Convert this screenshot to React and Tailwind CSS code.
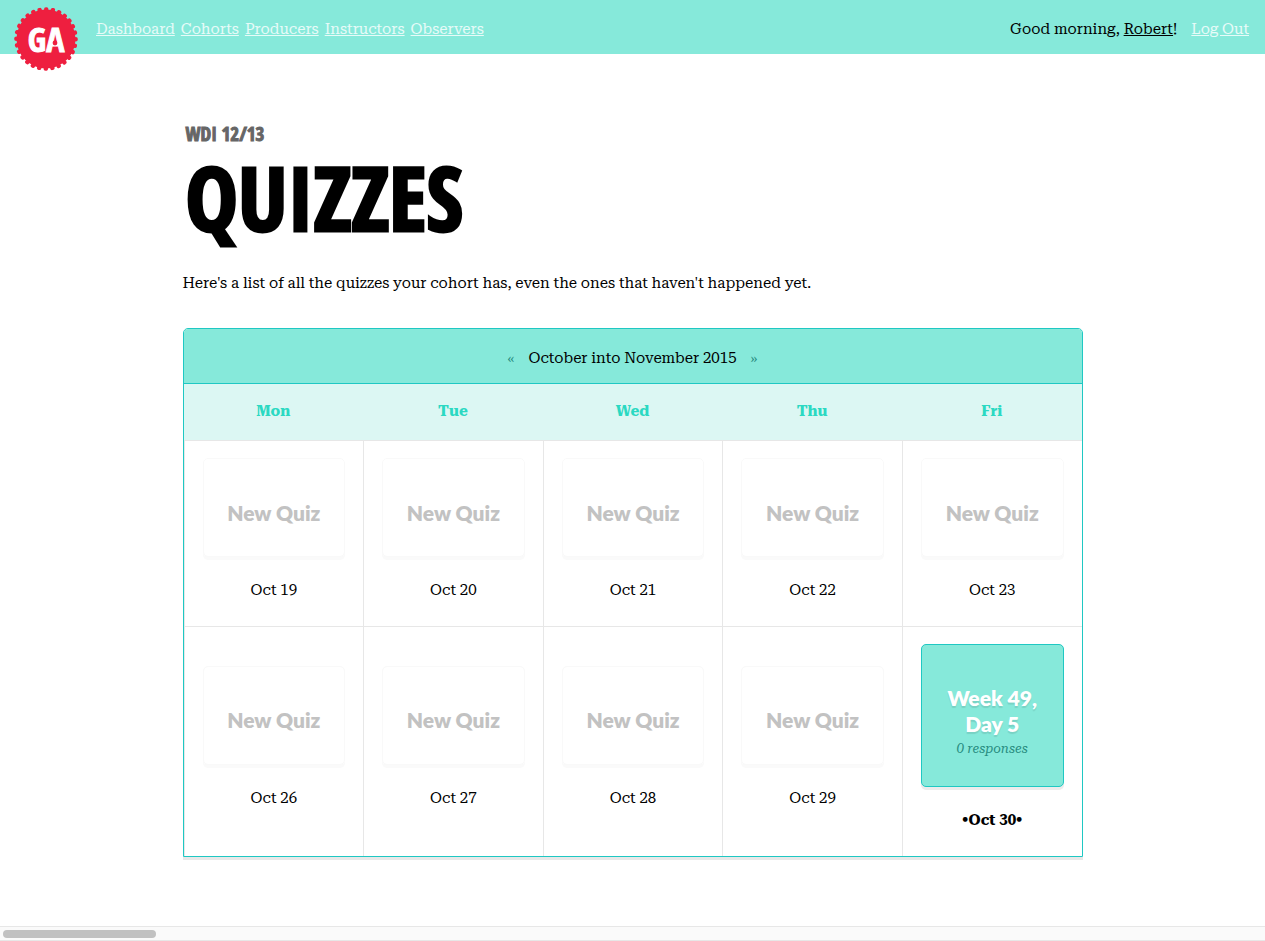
const navLinks = ["Dashboard", "Cohorts", "Producers", "Instructors", "Observers"];
const days = ["Mon", "Tue", "Wed", "Thu", "Fri"];
const weeks = [
  [{ date: "Oct 19" }, { date: "Oct 20" }, { date: "Oct 21" }, { date: "Oct 22" }, { date: "Oct 23" }],
  [
    { date: "Oct 26" },
    { date: "Oct 27" },
    { date: "Oct 28" },
    { date: "Oct 29" },
    { date: "Oct 30", today: true, quiz: { title: "Week 49, Day 5", responses: 0 } },
  ],
];

function Logo() {
  return (
    <svg viewBox="0 0 64 64" className="size-16" role="img" aria-label="General Assembly">
      <circle cx="32" cy="32" r="29.5" fill="#ee1f3f" />
      <circle
        cx="32"
        cy="32"
        r="29.8"
        fill="none"
        stroke="#ee1f3f"
        strokeWidth="4"
        strokeLinecap="round"
        strokeDasharray="0.5 6.5"
        pathLength="196"
      />
      <text
        x="32"
        y="45"
        textAnchor="middle"
        fill="#fff"
        stroke="#fff"
        strokeWidth="1"
        className="font-['Open_Sans_Condensed','Roboto_Condensed',sans-serif] text-[34px] font-bold"
      >
        GA
      </text>
      <circle cx="41" cy="36" r="2.4" fill="#ee1f3f" />
    </svg>
  );
}

function Header() {
  return (
    <header className="flex h-[54px] items-start gap-[18px] bg-[#86e9da] pr-4 pl-[14px]">
      <a href="#home" className="mt-[7px] shrink-0">
        <Logo />
      </a>
      <nav className="flex h-[58px] flex-1 items-center gap-[6px]">
        {navLinks.map((label) => (
          <a key={label} href={`#${label.toLowerCase()}`} className="text-white/80 underline">
            {label}
          </a>
        ))}
      </nav>
      <div className="flex h-[58px] items-center gap-[14px]">
        <p>
          Good morning,{" "}
          <a href="#profile" className="underline">
            Robert
          </a>
          !
        </p>
        <a href="#logout" className="text-white/80 underline">
          Log Out
        </a>
      </div>
    </header>
  );
}

function QuizCard({ quiz }) {
  if (!quiz) {
    return (
      <a
        href="#new-quiz"
        className="flex h-[99px] items-center justify-center rounded-[5px] border border-[#f9f9f9] pt-[10px] font-['Lato',sans-serif] text-[21px] leading-[26px] font-extrabold text-[#c2c2c2] shadow-[0_3px_0_#fafafa]"
      >
        New Quiz
      </a>
    );
  }
  return (
    <a
      href="#quiz"
      className="flex aspect-square flex-col items-center justify-center rounded-[5px] border border-[#1fc8c3] bg-[#86e9da] px-4 pt-4 shadow-[0_3px_0_#ececec]"
    >
      <span className="font-['Lato',sans-serif] text-[21px] leading-[26px] font-extrabold text-white [text-shadow:0_2px_1px_rgba(0,0,0,0.1)]">
        {quiz.title}
      </span>
      <em className="text-[13px] leading-6 text-[#288c80]">{quiz.responses} responses</em>
    </a>
  );
}

function Calendar() {
  return (
    <section className="overflow-hidden rounded-[5px] rounded-b-none border border-[#1fc8c3] shadow-[0_3px_0_#e8e8e8]">
      <div className="flex items-center justify-center gap-[14px] border-b border-[#1fc8c3] bg-[#86e9da] pt-[17px] pb-[13px]">
        <a href="#previous" aria-label="Previous weeks" className="text-sm leading-6 text-[#288c80]">
          «
        </a>
        <h2>October into November 2015</h2>
        <a href="#next" aria-label="Next weeks" className="text-sm leading-6 text-[#288c80]">
          »
        </a>
      </div>
      <table className="w-full table-fixed border-separate border-spacing-0 text-center">
        <thead className="bg-[#dcf7f3] text-[#2bd9c2]">
          <tr>
            {days.map((day) => (
              <th key={day} scope="col" className="pt-[15px] pb-[17px] font-bold">
                {day}
              </th>
            ))}
          </tr>
        </thead>
        <tbody>
          {weeks.map((week) => (
            <tr key={week[0].date}>
              {week.map(({ date, today, quiz }) => (
                <td
                  key={date}
                  className="border-t border-l border-[#e7e7e7] px-[18px] pt-[17px] pb-6 align-middle"
                >
                  <QuizCard quiz={quiz} />
                  <p className={today ? "mt-[21px] font-bold" : "mt-[21px]"}>{today ? `•${date}•` : date}</p>
                </td>
              ))}
            </tr>
          ))}
        </tbody>
      </table>
    </section>
  );
}

export default function App() {
  return (
    <div className="flex min-h-screen flex-col bg-white font-['Roboto_Serif','DejaVu_Serif_Condensed',serif] text-[15px] leading-6 text-black lining-nums">
      <Header />
      <main className="mx-auto w-full max-w-[900px] flex-1 pt-[66px] pb-16">
        <div className="pl-[3px] font-['Open_Sans_Condensed','Roboto_Condensed',sans-serif] font-bold">
          <p className="text-[19px] leading-7 text-[#666] [-webkit-text-stroke:1px_#666]">WDI 12/13</p>
          <h1 className="text-[88px] leading-[98px] [-webkit-text-stroke:3px_#000]">QUIZZES</h1>
        </div>
        <p className="mt-[25px] mb-[33px]">
          Here's a list of all the quizzes your cohort has, even the ones that haven't happened yet.
        </p>
        <Calendar />
      </main>
      <div className="h-[15px] border-y border-[#e7e7e7] bg-[#fafafa] px-[3px] pt-[3px]">
        <div className="h-2 w-[153px] rounded-full bg-[#c1c1c1]" />
      </div>
    </div>
  );
}
